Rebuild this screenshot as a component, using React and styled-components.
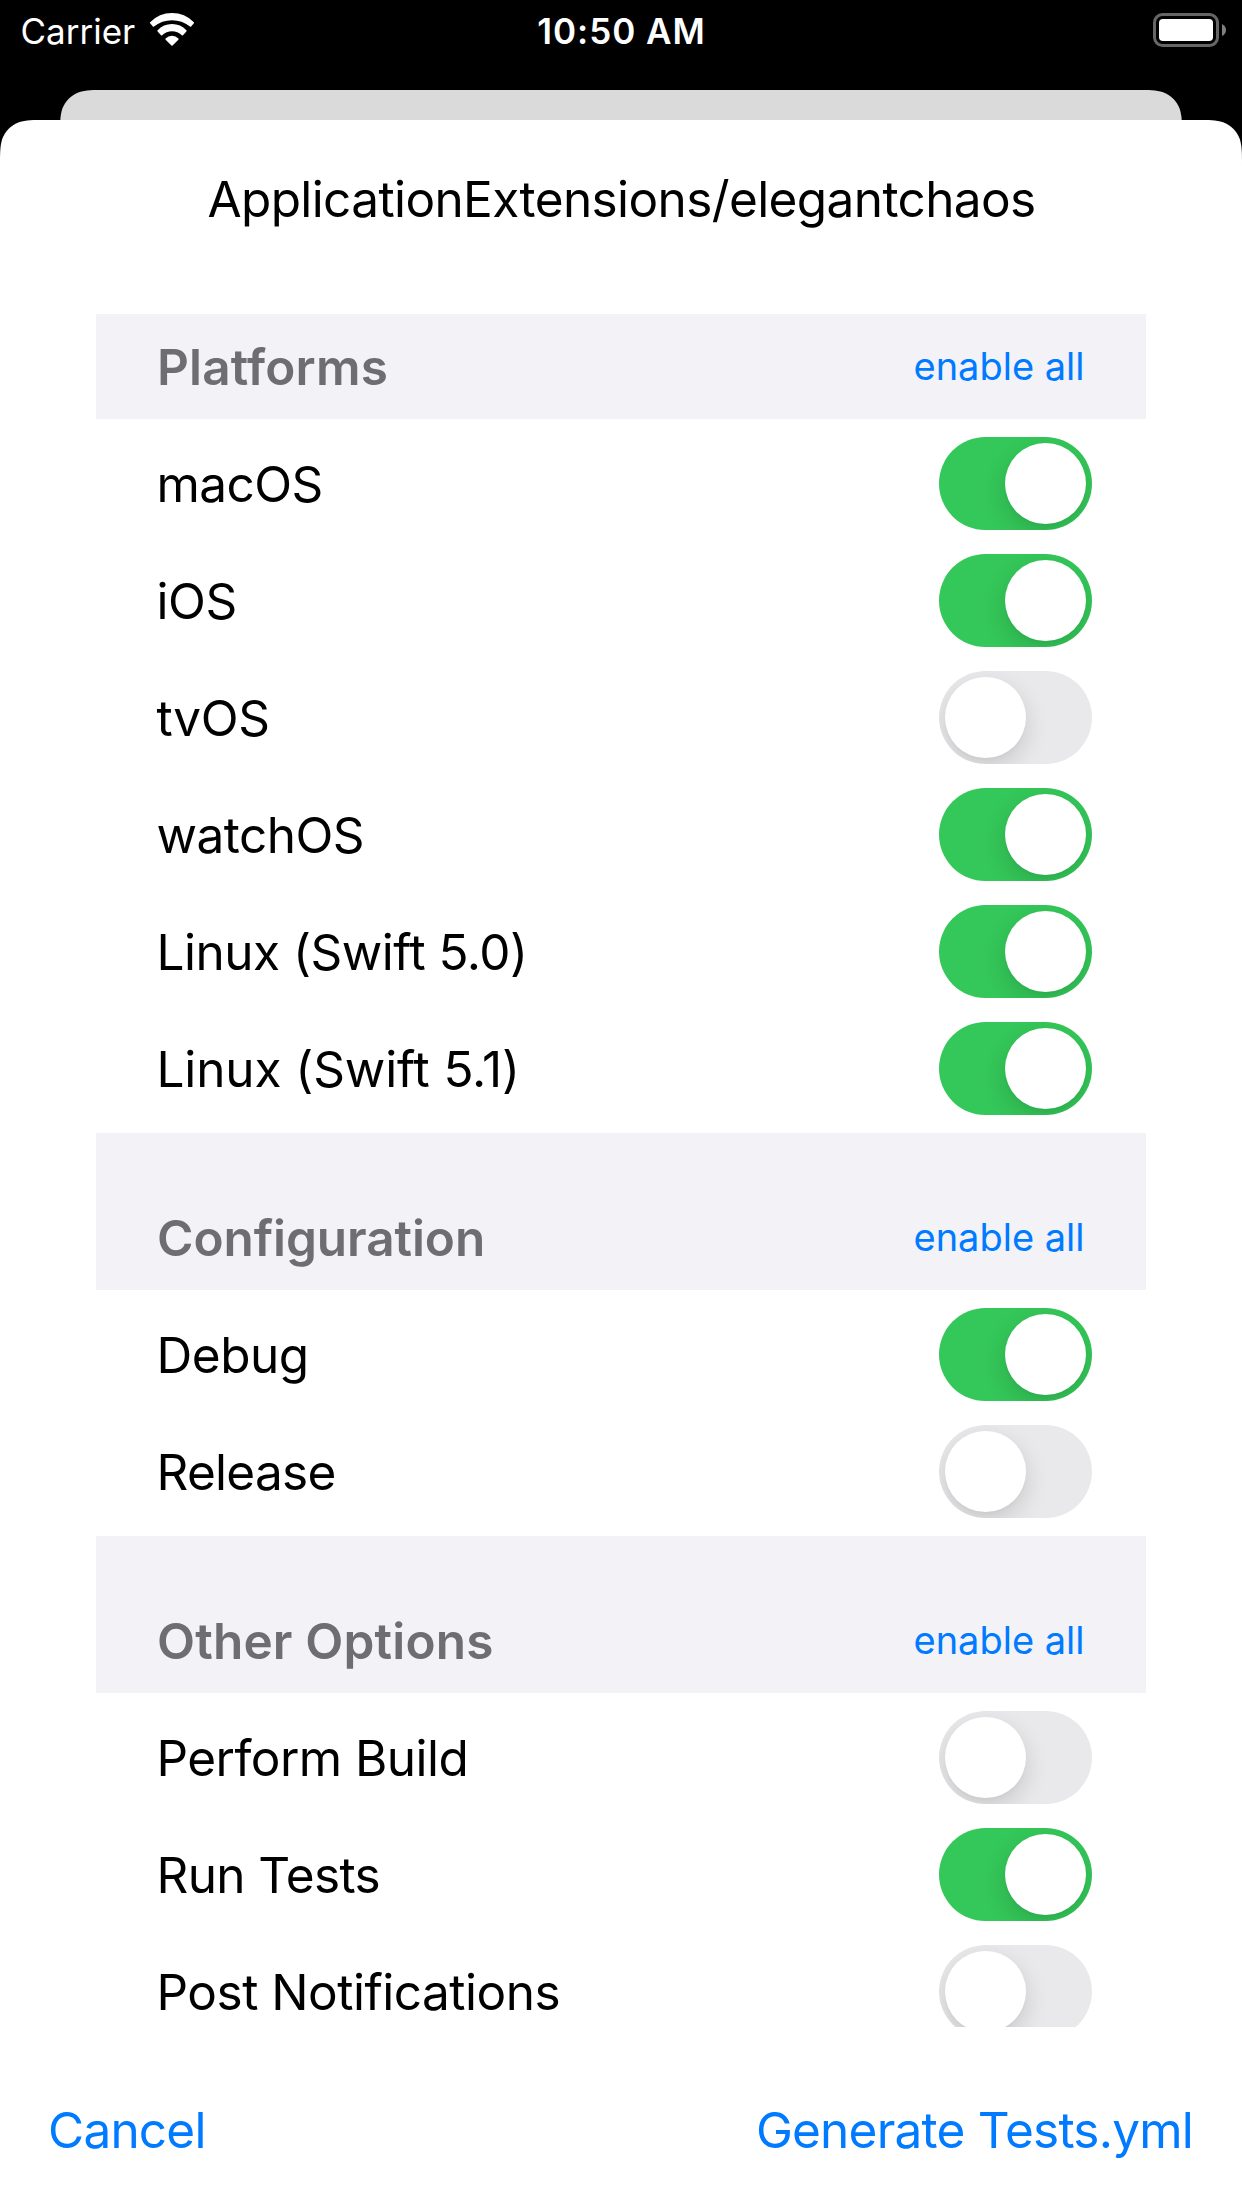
import React, { useState } from "react";
import styled, { createGlobalStyle } from "styled-components";

const GlobalStyle = createGlobalStyle`
  *, *::before, *::after { box-sizing: border-box; }
  body {
    margin: 0;
    background: #000;
    font-family: Inter, "Liberation Sans", sans-serif;
  }
`;

const BLUE = "#007aff";

/* Continuous-curvature top corners, radius 30 */
const roundedTop = (w, h) =>
  `path("M0 ${h} L0 45.9 C0 32.7 0 26.1 2.2 18.9 C5.1 11.2 11.2 5.1 18.9 2.2 C26.1 0 32.7 0 45.9 0 L${w - 45.9} 0 C${w - 32.7} 0 ${w - 26.1} 0 ${w - 18.9} 2.2 C${w - 11.2} 5.1 ${w - 5.1} 11.2 ${w - 2.2} 18.9 C${w} 26.1 ${w} 32.7 ${w} 45.9 L${w} ${h} Z")`;

const Screen = styled.main`
  display: flex;
  flex-direction: column;
  width: 1242px;
  height: 2208px;
  overflow: hidden;
  background: #000;
`;

const StatusBar = styled.div`
  display: grid;
  grid-template-columns: 1fr auto 1fr;
  height: 90px;
  padding: 10px 15px 0 20px;
  color: #fff;
  font-size: 35px;
  line-height: 42px;
`;

const Carrier = styled.div`
  display: flex;
  gap: 14px;
  padding-left: 0.5px;
`;

const WifiIcon = styled.svg`
  width: 46px;
  height: 35px;
  margin-top: 2px;
  fill: #fff;
  stroke: #fff;
  stroke-width: 1.6;
  stroke-linejoin: round;
`;

const Clock = styled.div`
  padding-right: 4px;
  font-weight: 600;
  letter-spacing: 0.95px;
`;

const BatteryIcon = styled.svg`
  width: 74px;
  height: 34px;
  margin-top: 3px;
  justify-self: end;
`;

const BackCard = styled.div`
  width: 1122px;
  height: 30px;
  margin: 0 auto;
  background: #dadada;
  clip-path: ${roundedTop(1122, 60)};
`;

const Sheet = styled.section`
  display: flex;
  flex-direction: column;
  height: 2088px;
  background: #fff;
  clip-path: ${roundedTop(1242, 2088)};
`;

const Title = styled.h1`
  height: 194px;
  margin: 0;
  padding: 49px 0 0 1px;
  text-align: center;
  font-size: 49.5px;
  font-weight: 400;
  line-height: 60px;
  letter-spacing: -0.61px;
  color: #000;
`;

const List = styled.div`
  width: 1050px;
  height: 1713px;
  margin: 0 auto;
  overflow: hidden;
`;

const SectionHeader = styled.header`
  display: flex;
  align-items: flex-end;
  justify-content: space-between;
  height: ${(p) => (p.$first ? 105 : 157)}px;
  padding: 0 61.5px 22px 61px;
  background: #f2f2f7;
`;

const SectionTitle = styled.h2`
  margin: 0;
  font-size: 49.5px;
  font-weight: 600;
  line-height: 60px;
  letter-spacing: ${(p) => p.$tracking}px;
  color: #6d6d72;
`;

const EnableAll = styled.button`
  margin: 0 0 8px;
  padding: 0;
  border: 0;
  background: none;
  font: inherit;
  font-size: 38px;
  line-height: 46px;
  color: ${BLUE};
`;

const Rows = styled.div`
  padding: 6px 0;
`;

const Row = styled.div`
  display: flex;
  align-items: center;
  justify-content: space-between;
  height: 117px;
  padding: 0 54px 0 60.5px;
`;

const RowLabel = styled.span`
  padding-top: 1px;
  font-size: 49.5px;
  line-height: 60px;
  letter-spacing: ${(p) => p.$tracking}px;
  color: #000;
`;

const Track = styled.button`
  display: flex;
  justify-content: ${(p) => (p.$on ? "flex-end" : "flex-start")};
  width: 153px;
  height: 93px;
  padding: 6px;
  border: 0;
  border-radius: 46.5px;
  overflow: hidden;
  background: ${(p) => (p.$on ? "#34c759" : "#e9e9eb")};
`;

const Knob = styled.span`
  width: 81px;
  height: 81px;
  border-radius: 50%;
  background: #fff;
  box-shadow: 0 9px 24px rgba(0, 0, 0, 0.14), 0 3px 3px rgba(0, 0, 0, 0.02);
`;

const Footer = styled.footer`
  display: flex;
  align-items: flex-start;
  justify-content: space-between;
  height: 181px;
  padding: 73px 49px 0 48px;
`;

const FooterButton = styled.button`
  padding: 0;
  border: 0;
  background: none;
  font: inherit;
  font-size: 49.5px;
  line-height: 60px;
  letter-spacing: -0.78px;
  color: ${BLUE};
`;

const SECTIONS = [
  {
    title: "Platforms",
    tracking: 0.18,
    rows: [
      ["macOS", true, -0.58],
      ["iOS", true, -0.43],
      ["tvOS", false, -0.4],
      ["watchOS", true, -0.53],
      ["Linux (Swift 5.0)", true, -0.5],
      ["Linux (Swift 5.1)", true, -0.12],
    ],
  },
  {
    title: "Configuration",
    tracking: -0.08,
    rows: [
      ["Debug", true, -0.45],
      ["Release", false, -0.72],
    ],
  },
  {
    title: "Other Options",
    tracking: 0.17,
    rows: [
      ["Perform Build", false, -0.55],
      ["Run Tests", true, -0.63],
      ["Post Notifications", false, -0.5],
    ],
  },
];

function Toggle({ label, initial }) {
  const [on, setOn] = useState(initial);
  return (
    <Track
      type="button"
      role="switch"
      aria-checked={on}
      aria-label={label}
      $on={on}
      onClick={() => setOn(!on)}
    >
      <Knob />
    </Track>
  );
}

export default function App() {
  return (
    <Screen>
      <GlobalStyle />
      <StatusBar>
        <Carrier>
          <span>Carrier</span>
          <WifiIcon viewBox="0 0 46 35">
            <path d="M1.7 10.7A29.8 29.8 0 0 1 44.3 10.7L41.5 14A29 29 0 0 0 4.5 14Z" />
            <path d="M9.2 18.9A18.6 18.6 0 0 1 36.8 18.9L33.4 22.7A15 15 0 0 0 12.6 22.7Z" />
            <path d="M17.2 27.1A7.8 7.8 0 0 1 28.8 27.1L23 32.9Z" />
          </WifiIcon>
        </Carrier>
        <Clock>10:50 AM</Clock>
        <BatteryIcon viewBox="0 0 74 34">
          <rect x="1.5" y="1.5" width="63" height="31" rx="8" fill="none" stroke="#666" strokeWidth="3" />
          <rect x="6" y="6" width="54" height="22" rx="4" fill="#fff" />
          <path d="M69 11Q73 13 73 17T69 23Z" fill="#808080" />
        </BatteryIcon>
      </StatusBar>
      <BackCard />
      <Sheet>
        <Title>ApplicationExtensions/elegantchaos</Title>
        <List>
          {SECTIONS.map((section, i) => (
            <section key={section.title}>
              <SectionHeader $first={i === 0}>
                <SectionTitle $tracking={section.tracking}>{section.title}</SectionTitle>
                <EnableAll type="button">enable all</EnableAll>
              </SectionHeader>
              <Rows>
                {section.rows.map(([label, on, tracking]) => (
                  <Row key={label}>
                    <RowLabel $tracking={tracking}>{label}</RowLabel>
                    <Toggle label={label} initial={on} />
                  </Row>
                ))}
              </Rows>
            </section>
          ))}
        </List>
        <Footer>
          <FooterButton type="button">Cancel</FooterButton>
          <FooterButton type="button">Generate Tests.yml</FooterButton>
        </Footer>
      </Sheet>
    </Screen>
  );
}
